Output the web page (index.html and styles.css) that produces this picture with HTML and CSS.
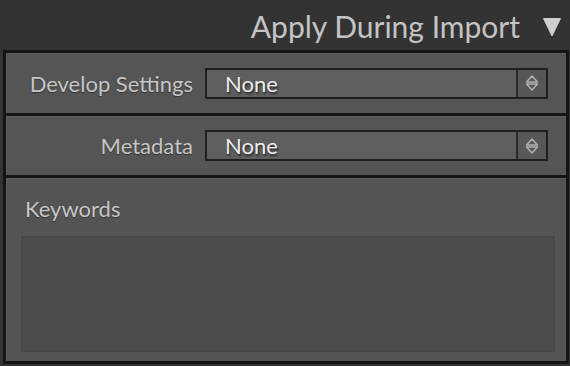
FILE: index.html
```html
<!DOCTYPE html>
<html lang="en">
<head>
  <meta charset="UTF-8" />
  <title>Apply During Import</title>
  <link rel="stylesheet" href="styles.css">
</head>
<body>
  <div class="header">
    <span class="title">Apply During Import</span>
    <svg class="toggle" width="20" height="20" viewBox="0 0 20 20">
      <path d="M1.5 1.5 H18.5 L10 19 Z" fill="#cfcfcf" stroke="#cfcfcf" stroke-width="1" stroke-linejoin="round" />
    </svg>
  </div>

  <div class="panel">
    <div class="row">
      <span class="label">Develop Settings</span>
      <div class="select">
        <span class="value">None</span>
        <span class="spin">
          <svg width="16" height="20" viewBox="0 0 16 20">
            <path d="M2.5 9 L8 3 L13.5 9 Z M2.5 11 L8 17 L13.5 11 Z" fill="none" stroke="#b0b0b0" stroke-width="1.5" stroke-linejoin="round" />
          </svg>
        </span>
      </div>
    </div>

    <div class="row">
      <span class="label">Metadata</span>
      <div class="select">
        <span class="value">None</span>
        <span class="spin">
          <svg width="16" height="20" viewBox="0 0 16 20">
            <path d="M2.5 9 L8 3 L13.5 9 Z M2.5 11 L8 17 L13.5 11 Z" fill="none" stroke="#b0b0b0" stroke-width="1.5" stroke-linejoin="round" />
          </svg>
        </span>
      </div>
    </div>

    <div class="keywords">
      <span class="kw-label">Keywords</span>
      <div class="kw-box"></div>
    </div>
  </div>
</body>
</html>
```

FILE: styles.css
```css
body {
  margin: 0;
  background: #333333;
  font-family: Lato, "Open Sans", sans-serif;
  height: 366px;
  overflow: hidden;
}

.header {
  height: 50px;
  display: flex;
  align-items: center;
  justify-content: flex-end;
  padding-right: 8px;
  box-sizing: border-box;
}

.title {
  font-size: 30px;
  color: #c4c4c4;
  margin-right: 22px;
  margin-top: 2px;
}

.toggle {
  margin-top: 3px;
}

.panel {
  margin: 0 1px 0 3px;
  border: 3px solid #141414;
  background: #141414;
  display: flex;
  flex-direction: column;
  gap: 3px;
}

.row {
  height: 60px;
  background: #555555;
  box-shadow: inset 1px 1px 0 #5e5e5e;
  display: flex;
  align-items: center;
}

.row + .row {
  height: 59px;
}

.label {
  width: 187px;
  text-align: right;
  font-size: 22px;
  color: #c6c6c6;
  text-shadow: 0 1px 1px #333;
}

.select {
  margin-left: 12px;
  width: 343px;
  height: 31px;
  box-sizing: border-box;
  border: 2px solid #1f1f1f;
  background: #5f5f5f;
  display: flex;
  align-items: center;
}

.value {
  flex: 1;
  padding-left: 18px;
  font-size: 22px;
  color: #ececec;
  text-shadow: 1px 2px 2px #2a2a2a;
}

.spin {
  width: 28px;
  height: 100%;
  border-left: 2px solid #2a2a2a;
  background: #575757;
  display: flex;
  align-items: center;
  justify-content: center;
}

.keywords {
  height: 183px;
  background: #545454;
  box-shadow: inset 1px 1px 0 #5e5e5e;
  padding: 17px 11px 9px 15px;
  box-sizing: border-box;
  display: flex;
  flex-direction: column;
}

.kw-label {
  font-size: 22px;
  color: #c6c6c6;
  text-shadow: 0 1px 1px #333;
  margin-left: 4px;
}

.kw-box {
  margin-top: 14px;
  flex: 1;
  border: 2px solid #474747;
  background: #4c4c4c;
}
```
